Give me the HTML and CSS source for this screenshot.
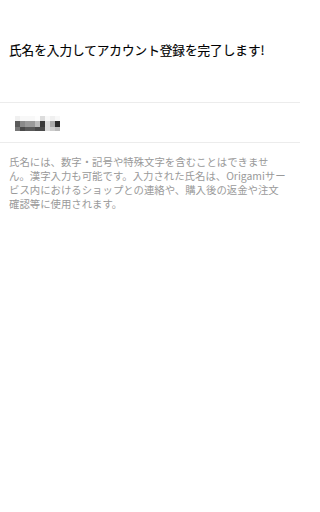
FILE: index.html
```html
<!DOCTYPE html>
<html lang="ja">
<head>
<meta charset="utf-8">
<link rel="stylesheet" href="styles.css">
</head>
<body>
<div class="page">
  <header class="header">
    <h1 class="title">氏名を入力してアカウント登録を完了します!</h1>
  </header>
  <div class="field">
    <div class="mosaic" aria-label="入力済みの氏名">
      <span class="c c0"></span><span class="c c1"></span><span class="c c1"></span><span class="c c1"></span><span class="c c2"></span><span class="c c3"></span><span class="c c1"></span><span class="c c0"></span><span class="c c1"></span>
      <span class="c d5"></span><span class="c d8"></span><span class="c d9"></span><span class="c d9"></span><span class="c db"></span><span class="c d3"></span><span class="c dd"></span><span class="c da"></span><span class="c d2"></span>
      <span class="c d7"></span><span class="c d4"></span><span class="c d5"></span><span class="c d5"></span><span class="c d4"></span><span class="c d4"></span><span class="c dd"></span><span class="c dc"></span><span class="c db"></span>
    </div>
  </div>
  <p class="note">氏名には、数字・記号や特殊文字を含むことはできませ<br>ん。漢字入力も可能です。入力された氏名は、Origamiサー<br>ビス内におけるショップとの連絡や、購入後の返金や注文<br>確認等に使用されます。</p>
</div>
</body>
</html>
```

FILE: styles.css
```css
html, body {
  margin: 0;
  padding: 0;
  background: #ffffff;
}
html {
  overflow: hidden;
}
body {
  font-family: "Noto Sans CJK JP", "Noto Sans", sans-serif;
}
.page {
  display: flex;
  flex-direction: column;
  width: 300px;
}
.header {
  padding: 41px 0 43px 9px;
  border-bottom: 1px solid #ececec;
}
.title {
  margin: 0;
  font-size: 12.6px;
  line-height: 18px;
  font-weight: 400;
  color: #000000;
  white-space: nowrap;
  -webkit-text-stroke: 0.15px #000000;
}
.field {
  height: 39px;
  display: flex;
  align-items: center;
  padding-left: 15px;
  border-bottom: 1px solid #ececec;
}
.mosaic {
  display: grid;
  grid-template-columns: repeat(9, 5px);
  grid-template-rows: 5px 6px 4px;
  margin-top: 2px;
  filter: blur(0.6px);
}
.c { display: block; }
.c0 { background: #f0f0f0; }
.c1 { background: #f8f8f8; }
.c2 { background: #fdfdfd; }
.c3 { background: #dcdcdc; }
.d2 { background: #2a2a2a; }
.d3 { background: #3a3a3a; }
.d4 { background: #4a4a4a; }
.d5 { background: #5a5a5a; }
.d7 { background: #777777; }
.d8 { background: #8a8a8a; }
.d9 { background: #9a9a9a; }
.da { background: #aaaaaa; }
.db { background: #bbbbbb; }
.dc { background: #cccccc; }
.dd { background: #dddddd; }
.note {
  margin: 0;
  padding: 12px 0 0 9px;
  font-size: 10.4px;
  line-height: 13.9px;
  color: #9a9a9a;
  white-space: nowrap;
}
```
